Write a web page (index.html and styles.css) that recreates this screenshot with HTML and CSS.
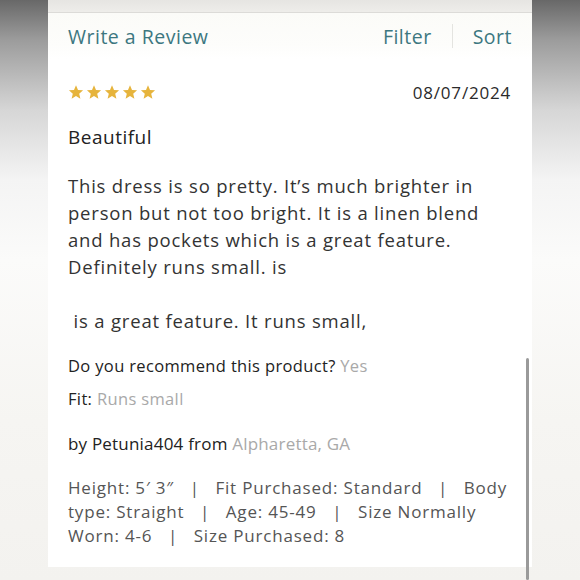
FILE: index.html
```html
<!DOCTYPE html>
<html>
<head>
<meta charset="utf-8">
<link rel="stylesheet" href="styles.css">
</head>
<body>
<div class="frame">
  <div class="sheet">
    <div class="topstrip"></div>
    <header class="toolbar">
      <span class="link">Write a Review</span>
      <div class="actions">
        <span class="link">Filter</span>
        <span class="divider"></span>
        <span class="link">Sort</span>
      </div>
    </header>
    <article class="review">
      <div class="meta-row">
        <div class="stars">
          <svg viewBox="0 0 24 24"><path d="M12 1.8l3 7.1 7.6.6-5.8 5 1.8 7.5L12 18l-6.6 4 1.8-7.5-5.8-5 7.6-.6z"/></svg>
          <svg viewBox="0 0 24 24"><path d="M12 1.8l3 7.1 7.6.6-5.8 5 1.8 7.5L12 18l-6.6 4 1.8-7.5-5.8-5 7.6-.6z"/></svg>
          <svg viewBox="0 0 24 24"><path d="M12 1.8l3 7.1 7.6.6-5.8 5 1.8 7.5L12 18l-6.6 4 1.8-7.5-5.8-5 7.6-.6z"/></svg>
          <svg viewBox="0 0 24 24"><path d="M12 1.8l3 7.1 7.6.6-5.8 5 1.8 7.5L12 18l-6.6 4 1.8-7.5-5.8-5 7.6-.6z"/></svg>
          <svg viewBox="0 0 24 24"><path d="M12 1.8l3 7.1 7.6.6-5.8 5 1.8 7.5L12 18l-6.6 4 1.8-7.5-5.8-5 7.6-.6z"/></svg>
        </div>
        <span class="date">08/07/2024</span>
      </div>
      <h2 class="title">Beautiful</h2>
      <p class="body">This dress is so pretty. It’s much brighter in<br>person but not too bright. It is a linen blend<br>and has pockets which is a great feature.<br>Definitely runs small. is<br><br>&nbsp;is a great feature. It runs small,</p>
      <p class="qa">Do you recommend this product? <span class="muted">Yes</span></p>
      <p class="qa fit">Fit: <span class="muted">Runs small</span></p>
      <p class="author">by Petunia404 from <span class="muted">Alpharetta, GA</span></p>
      <p class="details">Height: 5′ 3″ &nbsp; | &nbsp; Fit Purchased: Standard &nbsp; | &nbsp; Body<br>type: Straight &nbsp; | &nbsp; Age: 45-49 &nbsp; | &nbsp; Size Normally<br>Worn: 4-6 &nbsp; | &nbsp; Size Purchased: 8</p>
    </article>
  </div>
  <div class="scrollbar"></div>
</div>
</body>
</html>
```
FILE: styles.css
```css
* { box-sizing: border-box; }
html, body { margin: 0; padding: 0; }
body {
  width: 580px;
  height: 580px;
  overflow: hidden;
  font-family: "Open Sans", Lato, sans-serif;
  background: #f4f3f0;
}
.frame {
  position: relative;
  width: 580px;
  height: 580px;
  padding: 0 48px 13px 48px;
  background: linear-gradient(to bottom, #686868 0px, #9c9c9c 40px, #d6d6d6 110px, #f4f4f4 180px, #fbfbfa 260px, #f6f5f2 420px, #f3f2ef 580px);
}
.sheet {
  height: 567px;
  background: #ffffff;
  display: flex;
  flex-direction: column;
}
.topstrip {
  height: 13px;
  flex: none;
  background: linear-gradient(to bottom, #e6e5e2, #eeedea);
  border-bottom: 1px solid #dcdbd8;
}
.toolbar {
  height: 46px;
  flex: none;
  display: flex;
  align-items: center;
  justify-content: space-between;
  padding: 0 20px 0 20px;
  background: linear-gradient(to bottom, #fbfbf8, #fdfdfb 70%, #ffffff);
}
.link {
  color: #3c7780;
  font-size: 19.5px;
  letter-spacing: 0.5px;
}
.actions {
  display: flex;
  align-items: center;
}
.divider {
  width: 1px;
  height: 24px;
  background: #e4e4e0;
  margin: 0 20px;
}
.review {
  padding: 0 21px 0 20px;
  color: #2e2e2e;
}
.meta-row {
  display: flex;
  align-items: center;
  justify-content: space-between;
  margin-top: 22px;
  height: 22px;
}
.stars {
  display: flex;
  gap: 2px;
}
.stars svg {
  width: 16px;
  height: 16px;
  fill: #e6b43c;
}
.date {
  font-size: 17px;
  color: #2a2a2a;
  letter-spacing: 0.8px;
}
.title {
  margin: 21px 0 0 0;
  font-size: 19px;
  line-height: 26px;
  font-weight: normal;
  color: #222;
  letter-spacing: 0.5px;
}
.body {
  margin: 22px 0 0 0;
  font-size: 18.5px;
  line-height: 27px;
  color: #333;
  letter-spacing: 0.8px;
  white-space: nowrap;
}
.qa {
  margin: 20px 0 0 0;
  font-size: 16.5px;
  color: #222;
  line-height: 24px;
  letter-spacing: 0.35px;
}
.qa.fit { margin-top: 9px; }
.muted { color: #a9a9a9; }
.author {
  margin: 21px 0 0 0;
  font-size: 17px;
  color: #222;
  line-height: 24px;
  letter-spacing: 0.2px;
}
.details {
  margin: 20px 0 0 0;
  font-size: 17px;
  line-height: 24px;
  color: #555;
  letter-spacing: 0.8px;
  white-space: nowrap;
}
.scrollbar {
  position: absolute;
  left: 526px;
  top: 358px;
  width: 3px;
  height: 222px;
  background: #9a9a9a;
  border-radius: 2px;
}
```
